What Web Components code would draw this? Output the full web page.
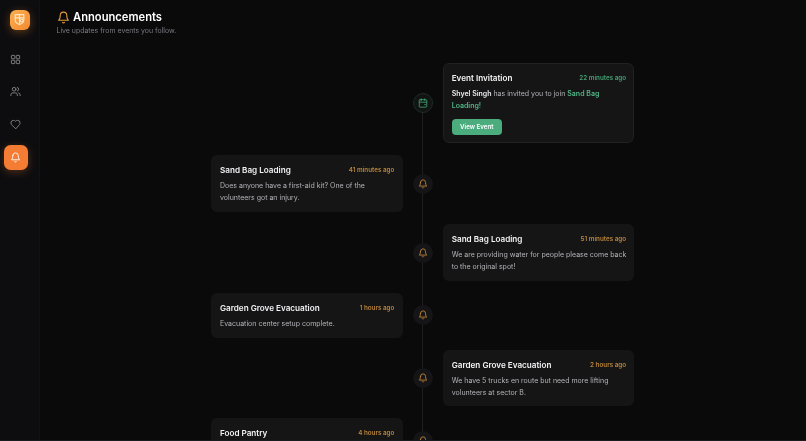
<!DOCTYPE html>
<html><head><meta charset="utf-8">
<style>
html,body{margin:0;height:100%;background:#0a0a0b;overflow:hidden;font-family:Inter,"Liberation Sans",sans-serif}
body{display:flex}
body::after{content:"";position:fixed;left:0;right:0;bottom:0;height:1px;background:#1b1b1d}
tl-row b{font-weight:600;color:#ececee}
tl-row b.g{color:#52b887}
</style></head><body>
<template id="ic-bell"><svg viewBox="0 0 24 24" fill="none" stroke="currentColor" stroke-width="2" stroke-linecap="round" stroke-linejoin="round"><path d="M10.3 21a1.94 1.94 0 0 0 3.4 0"/><path d="M6 8a6 6 0 0 1 12 0c0 7 3 9 3 9H3s3-2 3-9"/></svg></template>
<app-sidebar></app-sidebar>
<app-main>
<page-header title="Announcements" sub="Live updates from events you follow."></page-header>
<time-line>
<tl-row side="right" kind="event" h="Event Invitation" t="22 minutes ago"><b>Shyel Singh</b> has invited you to join <b class="g">Sand Bag Loading</b><b class="g">!</b></tl-row>
<tl-row side="left" h="Sand Bag Loading" t="41 minutes ago">Does anyone have a first-aid kit? One of the volunteers got an injury.</tl-row>
<tl-row side="right" h="Sand Bag Loading" t="51 minutes ago">We are providing water for people please come back to the original spot!</tl-row>
<tl-row side="left" h="Garden Grove Evacuation" t="1 hours ago">Evacuation center setup complete.</tl-row>
<tl-row side="right" h="Garden Grove Evacuation" t="2 hours ago">We have 5 trucks en route but need more lifting volunteers at sector B.</tl-row>
<tl-row side="left" h="Food Pantry" t="4 hours ago" style="--minh:46px"></tl-row>
</time-line>
</app-main>
<script>
const bell=()=>document.getElementById('ic-bell').innerHTML;
customElements.define('app-sidebar',class extends HTMLElement{constructor(){super();this.attachShadow({mode:'open'}).innerHTML=`<style>
:host{display:flex;flex:none;flex-direction:column;align-items:flex-start;width:40px;height:100%;background:#0d0d0f;box-sizing:border-box;padding:9.7px 0 0 3.5px;border-right:1px solid #121214;filter:blur(.35px)}
.logo{width:20.6px;height:20.6px;border-radius:6px;background:linear-gradient(135deg,#fbae52,#f58a2f);box-shadow:0 2px 9px rgba(245,140,50,.35);display:flex;align-items:center;justify-content:center;color:#fde6c4;margin:0 0 8.5px 6px}
.logo svg{width:13px;height:13px}
.it{width:24.5px;height:24.5px;display:flex;align-items:center;justify-content:center;color:#85858a;border-radius:6.5px;margin-top:8.2px}
.it svg{width:11px;height:11px}
.on{background:#f47c33;color:#fff;box-shadow:0 2px 9px rgba(244,124,51,.3)}
</style>
<div class="logo"><svg viewBox="0 0 24 24" fill="none" stroke="currentColor" stroke-width="2" stroke-linecap="round" stroke-linejoin="round"><path d="M4 3h16v9c0 5-4 8-8 9-4-1-8-4-8-9z"/><path d="M4 9h16M12 3v18"/><circle cx="16" cy="14" r="2.5"/></svg></div>
<div class="it"><svg viewBox="0 0 24 24" fill="none" stroke="currentColor" stroke-width="2" stroke-linejoin="round"><rect x="3" y="3" width="7.5" height="7.5" rx="1.5"/><rect x="13.5" y="3" width="7.5" height="7.5" rx="1.5"/><rect x="3" y="13.5" width="7.5" height="7.5" rx="1.5"/><rect x="13.5" y="13.5" width="7.5" height="7.5" rx="1.5"/></svg></div>
<div class="it"><svg viewBox="0 0 24 24" fill="none" stroke="currentColor" stroke-width="2" stroke-linecap="round" stroke-linejoin="round"><path d="M16 21v-2a4 4 0 0 0-4-4H6a4 4 0 0 0-4 4v2"/><circle cx="9" cy="7" r="4"/><path d="M22 21v-2a4 4 0 0 0-3-3.87"/><path d="M16 3.13a4 4 0 0 1 0 7.75"/></svg></div>
<div class="it"><svg viewBox="0 0 24 24" fill="none" stroke="currentColor" stroke-width="2" stroke-linecap="round" stroke-linejoin="round"><path d="M19 14c1.5-1.5 3-3.2 3-5.5A5.5 5.5 0 0 0 16.5 3c-1.8 0-3 .5-4.5 2-1.5-1.5-2.7-2-4.5-2A5.5 5.5 0 0 0 2 8.5c0 2.3 1.5 4 3 5.5l7 7z"/></svg></div>
<div class="it on">${bell()}</div>`}});
customElements.define('app-main',class extends HTMLElement{constructor(){super();this.attachShadow({mode:'open'}).innerHTML=`<style>
:host{display:flex;flex-direction:column;flex:1;min-width:0;height:100%;overflow:hidden}
</style><slot></slot>`}});
customElements.define('page-header',class extends HTMLElement{connectedCallback(){this.attachShadow({mode:'open'}).innerHTML=`<style>
:host{display:block;padding:9px 0 0 16.5px;height:55px;box-sizing:border-box;flex:none;will-change:transform;filter:blur(.35px)}
.t{display:flex;align-items:center;gap:3.5px;font-size:11.2px;font-weight:600;color:#fff;line-height:16px}
svg{width:13px;height:13px;color:#e09a3e}
.s{font-size:6.95px;color:#7a7a81;line-height:10px;margin-top:.5px}
</style><div class="t">${bell()}<span>${this.getAttribute('title')}</span></div><div class="s">${this.getAttribute('sub')}</div>`}});
customElements.define('time-line',class extends HTMLElement{constructor(){super();this.attachShadow({mode:'open'}).innerHTML=`<style>
:host{display:flex;flex-direction:column;gap:12px;width:423.4px;margin:7.5px auto 0;position:relative;flex:none;will-change:transform;filter:blur(.35px)}
.l{position:absolute;left:211.2px;top:40px;bottom:0;width:1px;background:#1f1f22}
</style><div class="l"></div><slot></slot>`}});
customElements.define('tl-row',class extends HTMLElement{connectedCallback(){
const right=this.getAttribute('side')==='right',ev=this.getAttribute('kind')==='event';
const cal=`<svg viewBox="0 0 24 24" fill="none" stroke="currentColor" stroke-width="2" stroke-linecap="round" stroke-linejoin="round"><path d="M8 2v4M16 2v4"/><rect x="3" y="4" width="18" height="18" rx="2"/><path d="M3 10h18"/><path d="M16 16h2"/></svg>`;
const card=`<div class="card ${ev?'ev':''}"><div class="top"><span class="h">${this.getAttribute('h')}</span><span class="time">${this.getAttribute('t')}</span></div><div class="body"><slot></slot></div>${ev?'<button>View Event</button>':''}</div>`;
this.attachShadow({mode:'open'}).innerHTML=`<style>
:host{display:grid;grid-template-columns:191.7px 40px 191.7px;align-items:center;position:relative;z-index:1}
.card{box-sizing:border-box;background:rgba(255,255,255,.048);border-radius:6px;padding:8px 8.3px 8px 9px;min-height:var(--minh,0)}
.card.ev{outline:1px solid rgba(255,255,255,.05);outline-offset:-1px;--tc:#46a072}
.top{display:flex;justify-content:space-between;align-items:center;height:14px}
.h{font-size:8.15px;font-weight:600;color:#f4f4f6}
.time{font-size:6.3px;font-weight:600;color:var(--tc,#b9853a)}
.body{font-size:7px;line-height:11.85px;color:#b4b4b9;margin:3px -1px 0 0}
button{all:unset;display:block;width:50px;height:16.4px;line-height:16.4px;text-align:center;border-radius:4px;background:rgba(76,174,126,.99);color:#fff;font-size:6.2px;font-weight:600;margin-top:7.4px}
.node{grid-column:2;justify-self:center;width:20px;height:20px;border-radius:50%;background:#151517;display:flex;align-items:center;justify-content:center;color:#c98c38}
.node.ev{background:#101513;border:1px solid #1f2c26;box-sizing:border-box;color:#46a072}
.node svg{width:10px;height:10px}
.c{grid-row:1}.c.r{grid-column:3}.c.l{grid-column:1}
</style><div class="c ${right?'r':'l'}">${card}</div><div class="node ${ev?'ev':''}" style="grid-row:1">${ev?cal:bell()}</div>`;
}});
</script></body></html>
